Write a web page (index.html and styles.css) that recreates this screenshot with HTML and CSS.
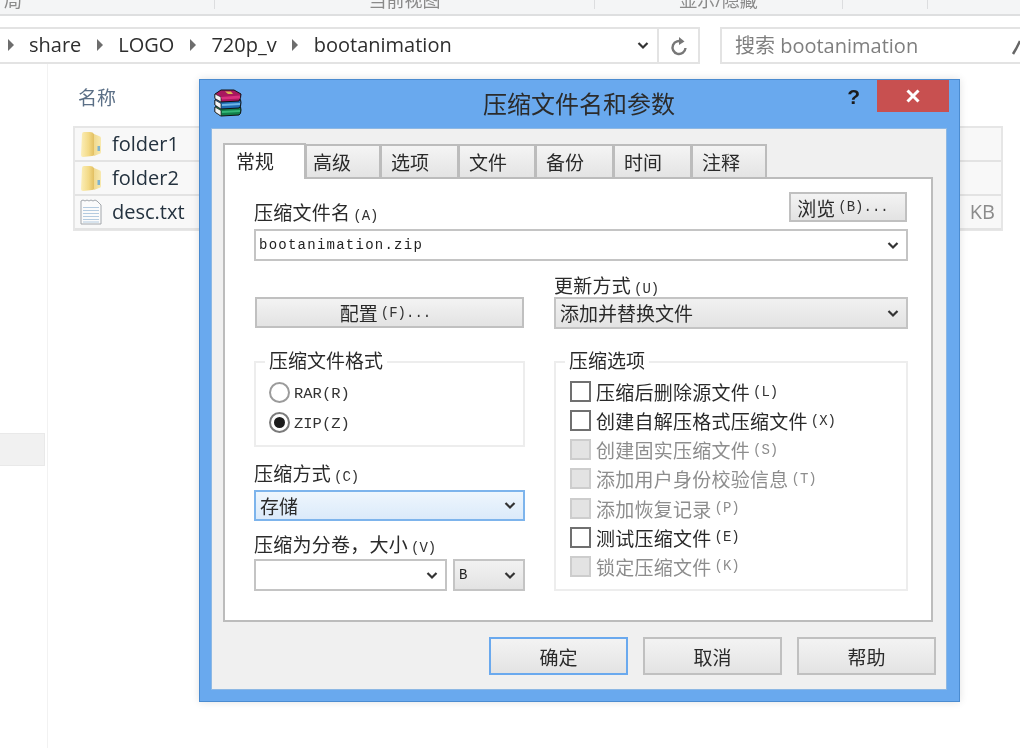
FILE: index.html
```html
<!DOCTYPE html>
<html lang="zh">
<head>
<meta charset="utf-8">
<title>压缩文件名和参数</title>
<link rel="stylesheet" href="styles.css">
</head>
<body>
<svg class="defs" width="0" height="0" aria-hidden="true">
  <defs>
    <linearGradient id="fy" x1="0" y1="0" x2="1" y2="0">
      <stop offset="0" stop-color="#fbeeb8"/><stop offset=".6" stop-color="#f3d985"/><stop offset="1" stop-color="#e2bf62"/>
    </linearGradient>
    <linearGradient id="fz" x1="0" y1="0" x2="1" y2="0">
      <stop offset="0" stop-color="#f0d98f"/><stop offset="1" stop-color="#f8e9ae"/>
    </linearGradient>
    <symbol id="chev" viewBox="0 0 12 9"><path d="M1.5 2 L6 6.5 L10.500 2" fill="none" stroke="#333" stroke-width="2.2"/></symbol>
    <symbol id="tri" viewBox="0 0 6 12"><path d="M0 0 L6 6 L0 12 Z" fill="#6d6d6d"/></symbol>
    <symbol id="folder" viewBox="0 0 22 26">
      <path d="M2 3 Q2 1 4 1 L10 1 Q13 1 14 3 L14 24 Q14 25 12 25 L3 26 Q1 26 1 24 Z" fill="url(#fy)"/>
      <path d="M14 3 L19 5 Q21 5.500 21 7 L21 21 Q21 23 19 23 L14 25 Z" fill="url(#fz)"/>
      <rect x="17.500" y="15" width="2.500" height="5" fill="#7fb3cf"/>
    </symbol>
    <symbol id="doc" viewBox="0 0 22 26">
      <path d="M1 2 Q3 0 5 2 Q7 0 9 2 Q11 0 13 2 Q15 0 17 2 L21 6 L21 25 L1 25 Z" fill="#fbfbfb" stroke="#a2a6ab"/>
      <path d="M3 8.500H19M3 11.500H19M3 14.500H19M3 17.500H19M3 20.500H19M3 23H19" stroke="#b4cbe0"/>
    </symbol>
  </defs>
</svg>

<div class="page">
  <header class="ribbon">
    <div class="ribbon-cell ribbon-first">局</div>
    <div class="ribbon-cell">当前视图</div>
    <div class="ribbon-cell">显示/隐藏</div>
    <div class="ribbon-cell"></div>
    <div class="ribbon-cell ribbon-last"></div>
  </header>

  <nav class="navbar">
    <div class="address">
      <div class="crumbs">
        <svg class="tri"><use href="#tri"/></svg><span>share</span>
        <svg class="tri"><use href="#tri"/></svg><span>LOGO</span>
        <svg class="tri"><use href="#tri"/></svg><span>720p_v</span>
        <svg class="tri"><use href="#tri"/></svg><span>bootanimation</span>
      </div>
      <svg class="addr-chev"><use href="#chev"/></svg>
      <div class="refresh">
        <svg width="18" height="20" viewBox="0 0 18 20"><path d="M12.500 6 A6.500 6.500 0 1 0 15.500 12" fill="none" stroke="#777" stroke-width="2.400"/><path d="M9 1 L14.500 5.500 L9 9 Z" fill="#777"/></svg>
      </div>
    </div>
    <div class="search">
      <span>搜索 bootanimation</span>
      <svg class="search-icon" width="12" height="20" viewBox="0 0 12 20"><path d="M5 19 L8 14 L12 6" fill="none" stroke="#666" stroke-width="2.500"/></svg>
    </div>
  </nav>

  <main class="explorer">
    <aside class="sidebar"><div class="side-sel"></div></aside>
    <section class="files">
      <div class="col-head">名称</div>
      <div class="file-rows">
        <div class="file-row"><svg class="file-icon"><use href="#folder"/></svg><span>folder1</span></div>
        <div class="file-row"><svg class="file-icon"><use href="#folder"/></svg><span>folder2</span></div>
        <div class="file-row"><svg class="file-icon"><use href="#doc"/></svg><span>desc.txt</span><span class="size">KB</span></div>
      </div>
    </section>
  </main>

  <div class="dialog">
    <div class="titlebar">
      <svg class="app-icon" width="28" height="28" viewBox="0 0 28 28">
        <path d="M1 18 L6 16 L25 16 Q27 17 27 21 Q27 25 25 26 L7 27 L1 23 Z" fill="#12804a" stroke="#111"/>
        <path d="M1 18 L7 21.500 L7 27 L1 23 Z" fill="#f4f4f4" stroke="#222" stroke-width=".7"/>
        <path d="M8 22 L26 21 L26 23 L8 24 Z" fill="#35b878"/>
        <path d="M1 11 L6 9 L25 9 Q27 10 27 13.500 Q27 18 25 19 L7 20 L1 16 Z" fill="#1f6db5" stroke="#111"/>
        <path d="M1 11 L7 14.500 L7 20 L1 16 Z" fill="#f4f4f4" stroke="#222" stroke-width=".7"/>
        <path d="M8 15 L26 14 L26 16 L8 17 Z" fill="#6fb6e6"/>
        <path d="M1 5 L7 1 L20 1 L27 5 Q27 9 25 12 L7 13 L1 9.500 Z" fill="#a9175f" stroke="#111"/>
        <path d="M1 5 L7 8 L7 13 L1 9.500 Z" fill="#f4f4f4" stroke="#222" stroke-width=".7"/>
        <path d="M7 8 L26 6.500 L26 9.500 L8 10.500 Z" fill="#d9307f"/>
        <path d="M11 2.500 L17 2.500 L19 5 L14 5 Z" fill="#d9b84e"/>
      </svg>
      <div class="title">压缩文件名和参数</div>
      <div class="help">?</div>
      <div class="close"><svg width="14" height="14" viewBox="0 0 14 14"><path d="M1.500 1.500 L12.500 12.500 M12.500 1.500 L1.500 12.500" stroke="#fff" stroke-width="3"/></svg></div>
    </div>

    <div class="client">
      <div class="tabs">
        <div class="tab tab-active">常规</div>
        <div class="tab tab-w75">高级</div>
        <div class="tab tab-w78">选项</div>
        <div class="tab tab-w77">文件</div>
        <div class="tab tab-w78">备份</div>
        <div class="tab tab-w78">时间</div>
        <div class="tab tab-w75 tab-last">注释</div>
      </div>

      <div class="panel">
        <div class="name-head">
          <div class="label label-name">压缩文件名<span class="hk">(A)</span></div>
          <div class="btn btn-browse">浏览<span class="hk">(B)...</span></div>
        </div>
        <div class="select select-name"><span class="mono">bootanimation.zip</span><svg class="chev"><use href="#chev"/></svg></div>

        <div class="columns">
          <div class="col col-left">
            <div class="btn btn-config">配置<span class="hk">(F)...</span></div>
            <div class="group group-format">
              <div class="group-title">压缩文件格式</div>
              <div class="radio-row"><span class="radio"></span><span class="hk hk-radio">RAR(R)</span></div>
              <div class="radio-row"><span class="radio radio-on"></span><span class="hk hk-radio">ZIP(Z)</span></div>
            </div>
            <div class="label label-method">压缩方式<span class="hk">(C)</span></div>
            <div class="select select-focus"><span>存储</span><svg class="chev"><use href="#chev"/></svg></div>
            <div class="label label-volume">压缩为分卷，大小<span class="hk">(V)</span></div>
            <div class="volume-row">
              <div class="select select-white select-size"><svg class="chev"><use href="#chev"/></svg></div>
              <div class="select select-unit"><span class="mono">B</span><svg class="chev"><use href="#chev"/></svg></div>
            </div>
          </div>

          <div class="col col-right">
            <div class="label label-update">更新方式<span class="hk">(U)</span></div>
            <div class="select select-update"><span>添加并替换文件</span><svg class="chev"><use href="#chev"/></svg></div>
            <div class="group group-options">
              <div class="group-title">压缩选项</div>
              <div class="check-row"><span class="check"></span>压缩后删除源文件<span class="hk">(L)</span></div>
              <div class="check-row"><span class="check"></span>创建自解压格式压缩文件<span class="hk">(X)</span></div>
              <div class="check-row is-off"><span class="check"></span>创建固实压缩文件<span class="hk">(S)</span></div>
              <div class="check-row is-off"><span class="check"></span>添加用户身份校验信息<span class="hk">(T)</span></div>
              <div class="check-row is-off"><span class="check"></span>添加恢复记录<span class="hk">(P)</span></div>
              <div class="check-row"><span class="check"></span>测试压缩文件<span class="hk">(E)</span></div>
              <div class="check-row is-off"><span class="check"></span>锁定压缩文件<span class="hk">(K)</span></div>
            </div>
          </div>
        </div>
      </div>

      <div class="actions">
        <div class="btn btn-action btn-default">确定</div>
        <div class="btn btn-action">取消</div>
        <div class="btn btn-action">帮助</div>
      </div>
    </div>
  </div>
</div>
</body>
</html>
```

FILE: styles.css
```css
* { box-sizing: border-box; }
html, body { margin: 0; padding: 0; background: #fff; }
.defs { position: absolute; }
.page {
  position: relative;
  width: 1020px;
  height: 748px;
  overflow: hidden;
  background: #fff;
  filter: blur(0.6px);
  font-family: "Open Sans", "Noto Sans CJK SC", sans-serif;
  color: #2c2c2c;
}

/* ribbon */
.ribbon {
  display: grid;
  grid-template-columns: 215px 380px 248px 85px 1fr;
  height: 16px;
  background: #f4f5f6;
  border-bottom: 2px solid #dedfe0;
  overflow: hidden;
}
.ribbon-cell {
  height: 9px;
  border-right: 1px solid #dcdddf;
  display: flex;
  justify-content: center;
  align-items: flex-end;
  font-size: 18px;
  line-height: 18px;
  color: #8a8a8a;
}
.ribbon-first { justify-content: flex-start; padding-left: 4px; }
.ribbon-last { border-right: 0; }

/* address row */
.navbar {
  display: flex;
  justify-content: space-between;
  margin-top: 11px;
  height: 37px;
}
.address {
  width: 700px;
  display: flex;
  align-items: center;
  border: 2px solid #e3e3e3;
  border-left: 0;
}
.crumbs {
  flex: 1;
  display: flex;
  align-items: center;
  gap: 15.5px;
  padding: 0 0 2px 7.5px;
  font-size: 20px;
  color: #2e2e2e;
}
.tri { width: 6px; height: 12px; }
.addr-chev { width: 12px; height: 9px; margin-right: 8px; }
.refresh {
  width: 41px;
  height: 100%;
  border-left: 2px solid #e3e3e3;
  display: flex;
  align-items: center;
  justify-content: center;
}
.search {
  width: 300px;
  display: flex;
  align-items: center;
  justify-content: space-between;
  border: 2px solid #e3e3e3;
  border-right: 0;
  padding: 0 0 2px 13px;
  font-size: 20px;
  color: #7f7f7f;
}

/* file list */
.explorer { display: flex; }
.sidebar {
  width: 48px;
  height: 690px;
  border-right: 1px solid #f2f2f2;
  padding-top: 369px;
}
.side-sel { width: 45px; height: 33px; background: #f1f1f1; border: 1px solid #e9e9e9; border-left: 0; }
.files { padding-left: 25px; width: 955px; }
.col-head { margin-top: 20px; margin-left: 5px; height: 42px; font-size: 19px; line-height: 28px; color: #5b6f86; }
.file-rows { border: 2px solid #e6e6e6; border-bottom-width: 1px; background: #f8f8f8; }
.file-row {
  display: flex;
  align-items: center;
  height: 34px;
  padding-left: 5px;
  gap: 10px;
  font-size: 20px;
  border-bottom: 2px solid #e3e3e3;
  color: #24323f;
}
.file-row span { margin-bottom: 2px; }
.file-icon { width: 22px; height: 26px; }
.size { margin-left: auto; padding-right: 6px; color: #8b8b8b; }

/* dialog */
.dialog {
  position: absolute;
  left: 199px;
  top: 79px;
  width: 761px;
  height: 623px;
  background: #69a9ee;
  border: 1px solid #4a8bd0;
  box-shadow: 0 0 8px rgba(0, 0, 0, .12);
  padding: 0 12px 11px 11px;
  display: flex;
  flex-direction: column;
  font-family: "Liberation Serif", "Noto Sans CJK SC", serif;
  font-size: 19px;
  color: #2a2a2a;
}
.titlebar {
  position: relative;
  height: 48px;
  flex: none;
  display: flex;
  align-items: center;
  justify-content: center;
}
.app-icon { position: absolute; left: 3px; top: 9px; }
.title { font-family: "Noto Sans CJK SC", sans-serif; font-size: 24px; color: #2b2b2b; position: relative; top: -2px; }
.help {
  position: absolute;
  right: 87px;
  top: 3px;
  font: bold 21px/28px "Liberation Sans", sans-serif;
  color: #1b1b1b;
}
.close {
  position: absolute;
  right: -2px;
  top: 0;
  width: 72px;
  height: 32px;
  background: #c85050;
  display: flex;
  align-items: center;
  justify-content: center;
}
.client {
  flex: 1;
  background: #f0f0f0;
  border: 1px solid #8db8e4;
  padding: 12px 13px 0 11px;
  display: flex;
  flex-direction: column;
}

/* tabs */
.tabs { display: flex; align-items: flex-end; height: 36px; position: relative; z-index: 1; }
.tab {
  height: 33px;
  border: 2px solid #bcbcbc;
  border-left-width: 1px;
  border-bottom: 0;
  background: linear-gradient(#f4f4f4, #e4e4e4);
  display: flex;
  align-items: center;
  padding-left: 6px;
  padding-bottom: 1px;
  font-family: "Noto Sans CJK SC", sans-serif;
  color: #2a2a2a;
}
.tab-active {
  width: 83px;
  height: 36px;
  margin-bottom: -2px;
  background: #fff;
  padding: 0 0 4px 11px;
  border-left-width: 2px;
}
.tab-w75 { width: 75px; }
.tab-w77 { width: 77px; padding-left: 9px; }
.tab-w78 { width: 78px; padding-left: 9px; }
.tab-last { padding-left: 9px; }

.panel {
  height: 445px;
  flex: none;
  background: #fff;
  border: 2px solid #bcbcbc;
  padding: 13px 23px 0 29px;
}
.label { line-height: 22px; white-space: nowrap; font-family: "Noto Sans CJK SC", sans-serif; letter-spacing: .25px; }
.label-name { margin-bottom: -5px; }
.hk {
  font-family: "Liberation Mono", monospace;
  font-size: 14px;
  margin-left: 3px;
  letter-spacing: 0;
  color: #333;
}
.mono { font-family: "Liberation Mono", monospace; font-size: 14px; letter-spacing: 1.25px; color: #222; }
.name-head { display: flex; justify-content: space-between; align-items: flex-end; height: 30px; }
.btn {
  display: flex;
  align-items: center;
  justify-content: center;
  border: 2px solid #c0c0c0;
  background: linear-gradient(#f3f3f3, #e3e3e3);
  font-family: "Noto Sans CJK SC", sans-serif;
}
.btn-browse { width: 118px; height: 30px; padding-right: 10px; margin-right: 1px; }
.select {
  display: flex;
  align-items: center;
  justify-content: space-between;
  border: 2px solid #c4c4c4;
  padding: 0 7px 0 4px;
  font-family: "Noto Sans CJK SC", sans-serif;
}
.select > span { margin-bottom: 1px; }
.chev { width: 12px; height: 9px; flex: none; }
.select-name { height: 32px; margin-top: 7px; background: #fff; padding-left: 3px; }
.columns {
  display: grid;
  grid-template-columns: 271px 354px;
  column-gap: 29px;
  margin-top: 16px;
}
.col { display: flex; flex-direction: column; }
.btn-config { height: 31px; margin-top: 20px; margin-left: 1px; width: 269px; padding-right: 8px; }
.group { position: relative; border: 2px solid #ededed; }
.group-title {
  position: absolute;
  left: 9px;
  top: -14px;
  padding: 0 4px;
  line-height: 22px;
  background: #fff;
  font-family: "Noto Sans CJK SC", sans-serif;
}
.group-format {
  height: 86px;
  margin-top: 33px;
  padding: 19px 0 0 13px;
  display: flex;
  flex-direction: column;
  gap: 9px;
}
.radio-row { display: flex; align-items: center; height: 21px; }
.radio {
  width: 21px;
  height: 21px;
  border-radius: 50%;
  border: 2px solid #9b9b9b;
  background: #fff;
  flex: none;
  display: flex;
  align-items: center;
  justify-content: center;
}
.radio-on { border-color: #7b7b7b; }
.radio-on::after { content: ""; width: 11px; height: 11px; border-radius: 50%; background: #1c1c1c; }
.hk-radio { font-size: 15.5px; margin: 2px 0 0 4px; }
.label-method { margin-top: 16px; height: 27px; line-height: 20px; }
.select-focus {
  height: 31px;
  width: 271px;
  border-color: #7db4ec;
  background: linear-gradient(#eef6fd, #dbeafa);
}
.label-volume { margin-top: 12px; height: 26px; }
.volume-row { display: flex; justify-content: space-between; }
.select-size { width: 193px; height: 32px; justify-content: flex-end; background: #fff; }
.select-unit { width: 72px; height: 32px; background: linear-gradient(#f2f2f2, #e3e3e3); }
.label-update { height: 20px; line-height: 16px; }
.select-update { height: 32px; background: linear-gradient(#f1f1f1, #e3e3e3); }
.group-options {
  height: 230px;
  margin-top: 32px;
  padding: 18px 0 0 14px;
  display: flex;
  flex-direction: column;
  gap: 8.17px;
}
.check-row { display: flex; align-items: center; height: 21px; white-space: nowrap; font-family: "Noto Sans CJK SC", sans-serif; letter-spacing: .25px; }
.check {
  width: 21px;
  height: 21px;
  border: 2px solid #707070;
  background: #fff;
  flex: none;
  margin-right: 5px;
}
.is-off { color: #8d8d8d; }
.is-off .hk { color: #8d8d8d; }
.is-off .check { background: #e3e3e3; border-color: #cdcdcd; }

/* action buttons */
.actions {
  display: flex;
  justify-content: flex-end;
  gap: 15px;
  margin-top: 15px;
  margin-right: -3px;
}
.btn-action { width: 139px; height: 38px; }
.btn-default { border-color: #6aa9ee; }
```
